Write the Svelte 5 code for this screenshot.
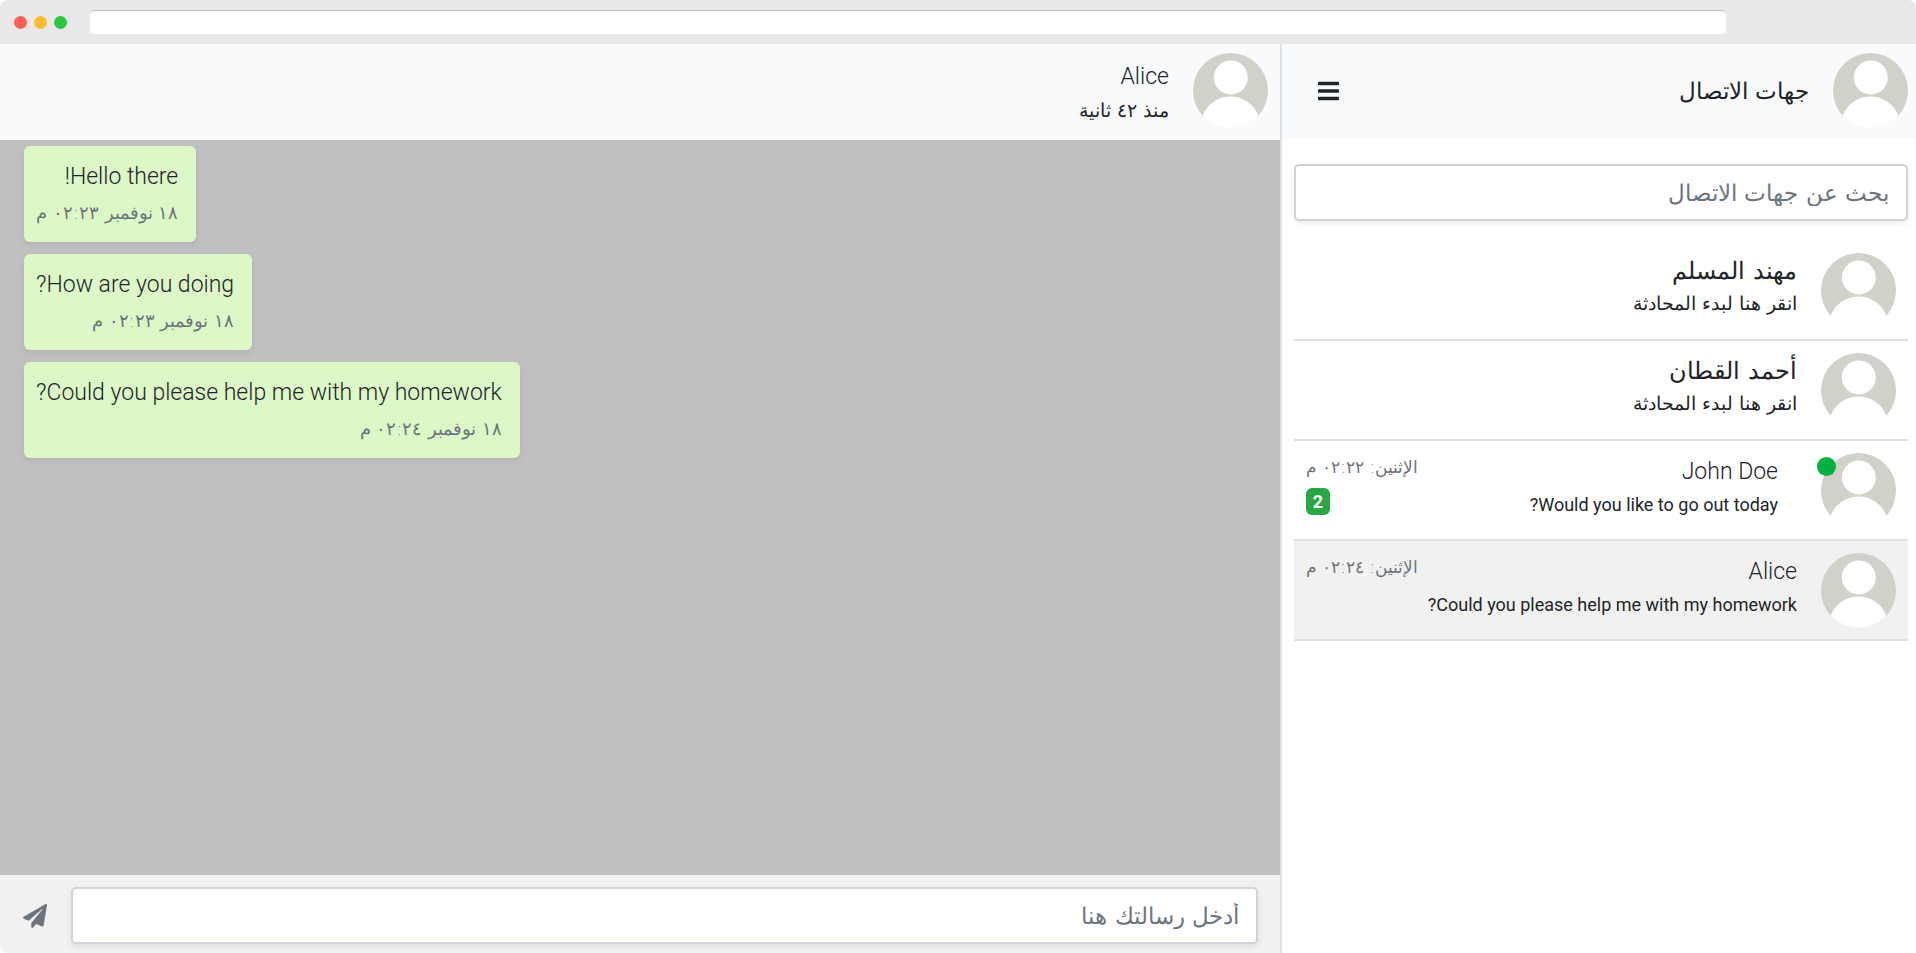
<script>
  const messages = [
    { text: 'Hello there!', time: '١٨ نوفمبر ٠٢:٢٣ م' },
    { text: 'How are you doing?', time: '١٨ نوفمبر ٠٢:٢٣ م' },
    { text: 'Could you please help me with my homework?', time: '١٨ نوفمبر ٠٢:٢٤ م' }
  ];

  const contacts = [
    { name: 'مهند المسلم', last: 'انقر هنا لبدء المحادثة' },
    { name: 'أحمد القطان', last: 'انقر هنا لبدء المحادثة' },
    { name: 'John Doe', last: 'Would you like to go out today?', time: 'الإثنين: ٠٢:٢٢ م', unread: 2, online: true },
    { name: 'Alice', last: 'Could you please help me with my homework?', time: 'الإثنين: ٠٢:٢٤ م', active: true }
  ];

  let search = $state('');
  let draft = $state('');
  const isArabic = (text) => /[\u0600-\u06ff]/.test(text);
</script>

{#snippet avatar()}
  <svg class="avatar" viewBox="0 0 75 75" aria-hidden="true">
    <circle cx="37.5" cy="37.5" r="37" fill="#fff" />
    <path fill="#d1d1c9" d="M9.7 62.7A37.5 37.5 0 1 1 65.3 62.7A29.7 29.7 0 0 0 9.7 62.7Z" />
    <circle cx="37.8" cy="24.4" r="17" fill="#fff" />
  </svg>
{/snippet}

<div class="window" dir="rtl">
  <div class="titlebar" dir="ltr">
    <span class="light red"></span>
    <span class="light amber"></span>
    <span class="light green"></span>
    <input class="address" type="text" aria-label="Address" />
  </div>

  <div class="app">
    <aside class="contacts">
      <header class="bar">
        {@render avatar()}
        <h1 class="title ar">جهات الاتصال</h1>
        <button class="icon menu" type="button" aria-label="القائمة">
          <svg viewBox="0 0 448 512" width="21" height="24"><path fill="currentColor" d="M16 132h416c8.837 0 16-7.163 16-16V76c0-8.837-7.163-16-16-16H16C7.163 60 0 67.163 0 76v40c0 8.837 7.163 16 16 16zm0 160h416c8.837 0 16-7.163 16-16v-40c0-8.837-7.163-16-16-16H16c-8.837 0-16 7.163-16 16v40c0 8.837 7.163 16 16 16zm0 160h416c8.837 0 16-7.163 16-16v-40c0-8.837-7.163-16-16-16H16c-8.837 0-16 7.163-16 16v40c0 8.837 7.163 16 16 16z" /></svg>
        </button>
      </header>

      <div class="search">
        <input class="field" type="text" placeholder="بحث عن جهات الاتصال" aria-label="بحث عن جهات الاتصال" bind:value={search} />
      </div>

      <ul class="list">
        {#each contacts as contact}
          <li class="contact" class:active={contact.active} class:online={contact.online}>
            <div class="picture">
              {@render avatar()}
              {#if contact.online}<span class="status"></span>{/if}
            </div>
            <div class="who">
              <div class="name" class:ar={isArabic(contact.name)}>{contact.name}</div>
              <div class="small" class:ar={isArabic(contact.last)}>{contact.last}</div>
            </div>
            {#if contact.time}
              <div class="meta">
                <div class="small ar time">{contact.time}</div>
                {#if contact.unread}<span class="badge">{contact.unread}</span>{/if}
              </div>
            {/if}
          </li>
        {/each}
      </ul>
    </aside>

    <main class="chat">
      <header class="bar">
        {@render avatar()}
        <div class="who">
          <div class="name">Alice</div>
          <div class="small ar">منذ ٤٢ ثانية</div>
        </div>
      </header>

      <div class="messages">
        {#each messages as message}
          <div class="bubble">
            <div class="text">{message.text}</div>
            <div class="small ar time">{message.time}</div>
          </div>
        {/each}
      </div>

      <form class="composer" onsubmit={(e) => e.preventDefault()}>
        <input class="field" type="text" placeholder="أدخل رسالتك هنا" aria-label="أدخل رسالتك هنا" bind:value={draft} />
        <button class="icon send" type="submit" aria-label="إرسال">
          <svg viewBox="0 0 512 512" width="24" height="24"><path fill="currentColor" d="M476 3.2L12.5 270.6c-18.1 10.4-15.8 35.6 2.2 43.2L121 358.4l287.3-253.2c5.5-4.9 13.3 2.6 8.6 8.3L176 407v80.5c0 23.6 28.5 32.9 42.5 15.8L282 426l124.6 52.2c14.2 6 30.4-2.9 33-18.2l72-432C515 7.8 493.3-6.8 476 3.2z" /></svg>
        </button>
      </form>
    </main>
  </div>
</div>

<style>
  :global(body) {
    margin: 0;
    background: #fff;
  }

  .window {
    display: flex;
    flex-direction: column;
    min-height: 100vh;
    overflow: hidden;
    border-radius: 8px;
    background: #fff;
    color: #212529;
    font-family: Roboto, 'DejaVu Sans', sans-serif;
    font-size: 23px;
    font-weight: 350;
    line-height: 38px;
  }

  .window * {
    box-sizing: border-box;
  }

  .titlebar {
    display: flex;
    align-items: center;
    gap: 7px;
    height: 44px;
    padding-left: 14px;
    background: #e8e8e8;
  }

  .light {
    width: 13px;
    height: 13px;
    border-radius: 50%;
  }

  .red {
    background: #ff5c54;
  }

  .amber {
    background: #ffbb2d;
  }

  .green {
    background: #28c840;
  }

  .address {
    flex: 1;
    height: 24px;
    margin: 0 10% 0 16px;
    padding: 0 8px;
    border: 0;
    border-top: 1px solid #bebebe;
    border-radius: 4px;
    background: #fff;
    font: 14px Roboto, sans-serif;
  }

  .app {
    display: flex;
    flex: 1;
  }

  .contacts {
    flex: 0 0 33.2%;
    border-left: 2px solid #dee2e6;
  }

  .chat {
    display: flex;
    flex: 1;
    flex-direction: column;
    min-width: 0;
  }

  .bar {
    display: flex;
    align-items: center;
    height: 96px;
    padding: 0 8px 3px;
    background: #f8fafc;
  }

  .chat .bar {
    padding-right: 12px;
  }

  .avatar {
    display: block;
    flex: none;
    width: 75px;
    height: 75px;
    margin-left: 24px;
  }

  .title {
    margin: 0;
    font-size: 23px;
    font-weight: 300;
  }

  .icon {
    display: flex;
    padding: 0;
    border: 0;
    background: none;
    color: #212529;
    cursor: pointer;
  }

  .menu {
    margin: 0 auto 0 28px;
  }

  .small {
    font-size: 18px;
    font-weight: 400;
    line-height: 28px;
  }

  .ar {
    font-family: 'DejaVu Sans', sans-serif;
    font-weight: 300;
  }

  .name.ar {
    font-size: 24px;
    line-height: 36px;
  }

  .who .small.ar {
    font-size: 19px;
  }

  .time {
    color: #6c757d;
  }

  .search {
    padding: 24px 8px 20px 12px;
  }

  .field {
    display: block;
    width: 100%;
    height: 57px;
    padding: 0 17px;
    border: 2px solid #ced4da;
    border-radius: 5px;
    background: #fff;
    box-shadow: 0 3px 6px rgba(0, 0, 0, 0.075);
    color: #495057;
    font: 300 23px 'DejaVu Sans', sans-serif;
    outline: none;
  }

  .field::placeholder {
    color: #6c757d;
    opacity: 1;
  }

  .list {
    margin: 0;
    padding: 0 8px 0 12px;
    list-style: none;
  }

  .contact {
    display: flex;
    padding: 12px 12px 11px;
    border-bottom: 2px solid #dee2e6;
  }

  .active {
    background: #f1f1f1;
  }

  .picture {
    position: relative;
    display: flex;
  }

  .status {
    position: absolute;
    top: 4px;
    right: 60px;
    width: 19px;
    height: 19px;
    border-radius: 50%;
    background: #00b341;
  }

  .online .who {
    margin-right: 19px;
  }

  .who {
    min-width: 0;
    white-space: nowrap;
  }

  .meta {
    width: 0;
    display: flex;
    flex-direction: column;
    align-items: flex-end;
    margin-right: auto;
    white-space: nowrap;
  }

  .meta .time {
    font-size: 17px;
  }

  .badge {
    flex: none;
    width: 24px;
    height: 27px;
    margin-top: 7px;
    border-radius: 6px;
    background: #28a745;
    color: #fff;
    font-size: 18px;
    font-weight: 700;
    line-height: 27px;
    text-align: center;
  }

  .messages {
    display: flex;
    flex: 1;
    flex-direction: column;
    align-items: flex-end;
    gap: 12px;
    padding: 6px 24px;
    background: #c0c0c0;
  }

  .bubble {
    height: 96px;
    padding: 12px 18px 12px 12px;
    border-radius: 6px;
    background: #dcf8c6;
    box-shadow: 0 3px 6px rgba(0, 0, 0, 0.075);
  }

  .bubble .time {
    margin-top: 3px;
  }

  .composer {
    display: flex;
    align-items: center;
    gap: 24px;
    padding: 12px 22px 9px 23px;
    background: #f1f1f1;
  }

  .composer .field {
    flex: 1;
    min-width: 0;
  }

  .send {
    color: #6c757d;
  }
</style>
